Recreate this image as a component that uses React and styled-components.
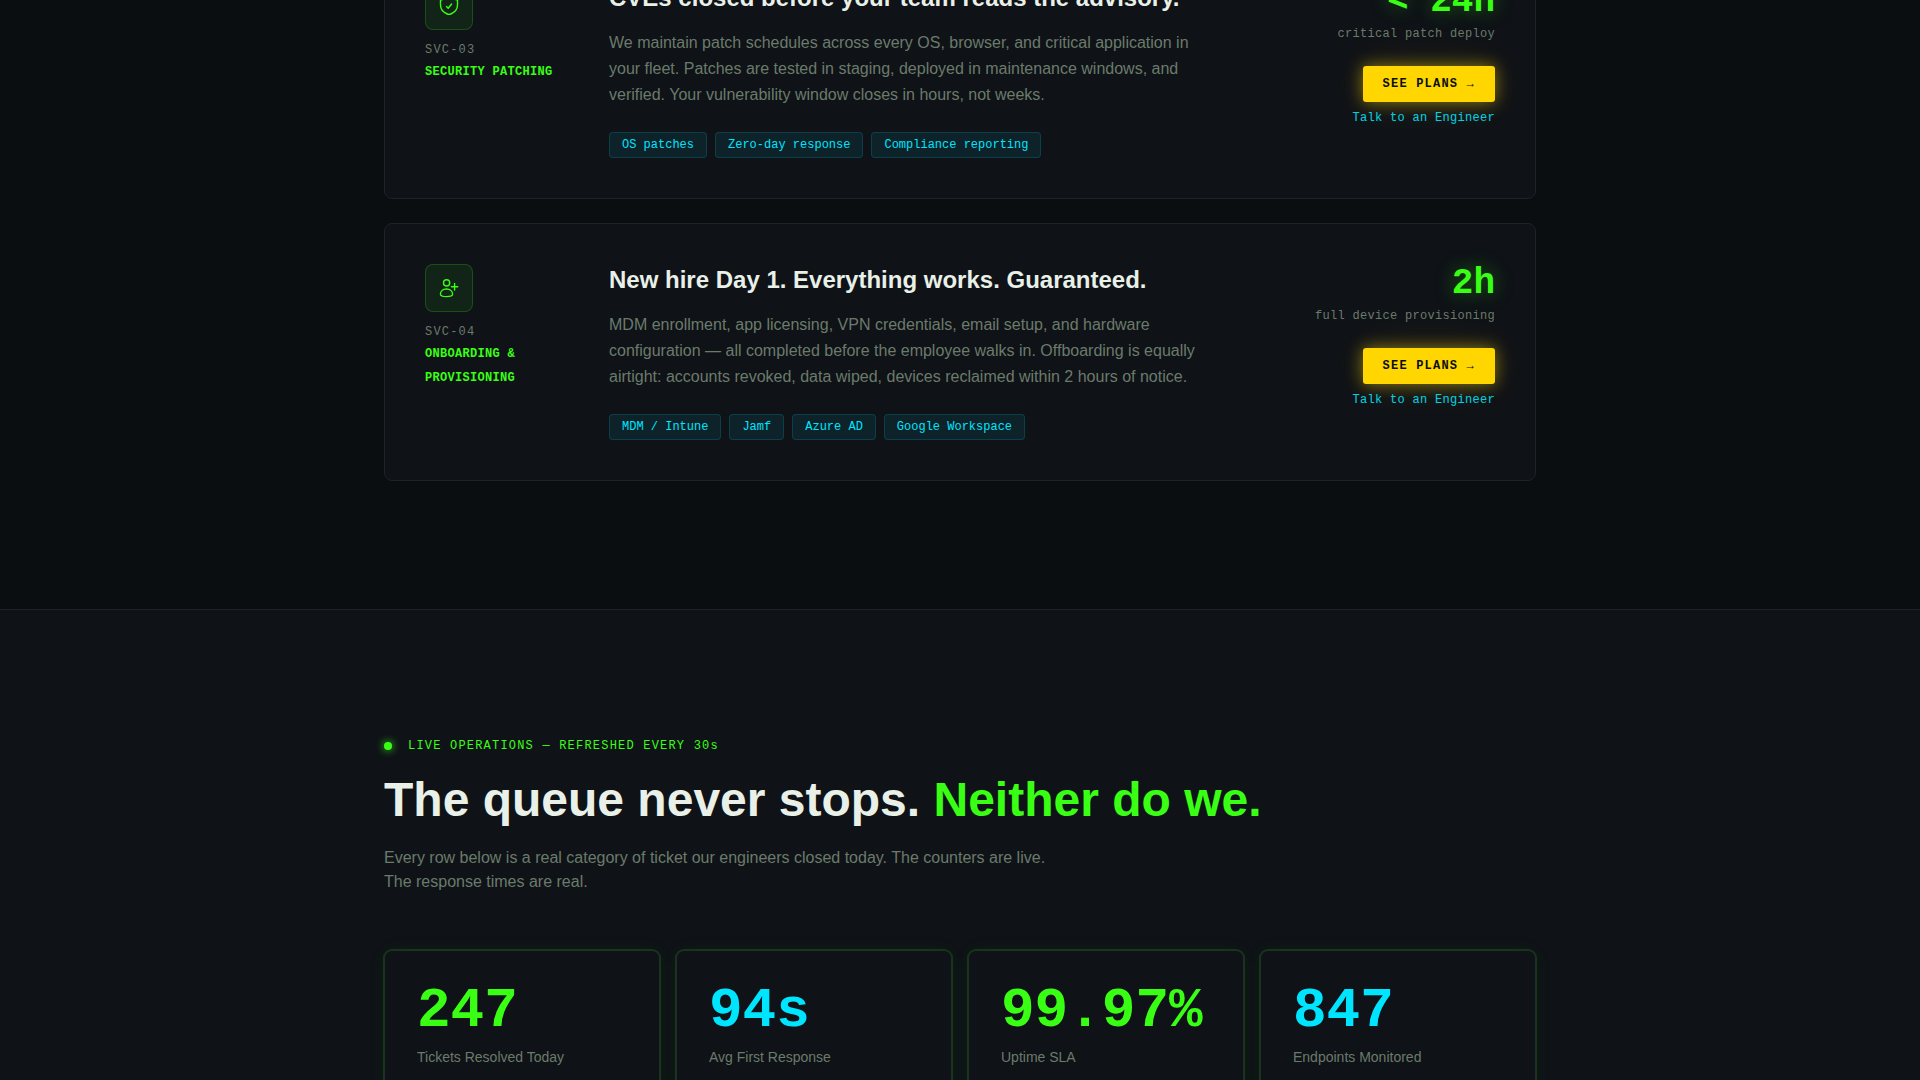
import styled, { createGlobalStyle } from "styled-components";

const services = [
    {
        id: "SVC-03",
        name: "SECURITY PATCHING",
        icon: "shield",
        title: "CVEs closed before your team reads the advisory.",
        text: "We maintain patch schedules across every OS, browser, and critical application in your fleet. Patches are tested in staging, deployed in maintenance windows, and verified. Your vulnerability window closes in hours, not weeks.",
        tags: ["OS patches", "Zero-day response", "Compliance reporting"],
        metric: "< 24h",
        metricLabel: "critical patch deploy"
    },
    {
        id: "SVC-04",
        name: "ONBOARDING & PROVISIONING",
        icon: "user",
        title: "New hire Day 1. Everything works. Guaranteed.",
        text: "MDM enrollment, app licensing, VPN credentials, email setup, and hardware configuration — all completed before the employee walks in. Offboarding is equally airtight: accounts revoked, data wiped, devices reclaimed within 2 hours of notice.",
        tags: ["MDM / Intune", "Jamf", "Azure AD", "Google Workspace"],
        metric: "2h",
        metricLabel: "full device provisioning"
    }
];

const stats = [
    { value: "247", label: "Tickets Resolved Today", color: "#39FF14" },
    { value: "94s", label: "Avg First Response", color: "#00E5FF" },
    { value: "99.97%", label: "Uptime SLA", color: "#39FF14" },
    { value: "847", label: "Endpoints Monitored", color: "#00E5FF" }
];

function ServiceIcon({ type }) {
    return (
        <svg width="20" height="20" viewBox="0 0 20 20" fill="none" stroke="currentColor" strokeWidth="1.4" strokeLinecap="round" strokeLinejoin="round" aria-hidden="true">
            {type === "shield" ?
                <>
                    <path d="M10 1.4 1.5 4.2v4.9c0 5.2 3.9 7.7 6.7 8.9q1.8.8 3.6 0c2.8-1.2 6.7-3.7 6.7-8.9V4.2Z" />
                    <path d="m7.5 10.6 1.7 1.7L12.6 8" />
                </>
                :
                <>
                    <circle cx="7.6" cy="4.9" r="3.1" />
                    <path d="M1.4 16.3C1.4 13 4 11 7.5 11s6.1 2 6.1 5.3c0 1.6-2.5 2.3-6.1 2.3s-6.1-.7-6.1-2.3Z" />
                    <path d="M15.6 5.4V12M12.4 8.7h6.3" />
                </>
            }
        </svg>
    );
}

export default function App() {
    return (
        <>
            <GlobalStyle />
            <Page>
                <Services>
                    <Container>
                        <ServiceList>
                            {services.map(s => (
                                <ServiceCard key={s.id}>
                                    <Identity>
                                        <IconBox><ServiceIcon type={s.icon} /></IconBox>
                                        <ServiceId>{s.id}</ServiceId>
                                        <ServiceName>{s.name}</ServiceName>
                                    </Identity>
                                    <Details>
                                        <ServiceTitle>{s.title}</ServiceTitle>
                                        <ServiceText>{s.text}</ServiceText>
                                        <Tags>
                                            {s.tags.map(t => <Tag key={t}>{t}</Tag>)}
                                        </Tags>
                                    </Details>
                                    <Action>
                                        <Metric>{s.metric}</Metric>
                                        <MetricLabel>{s.metricLabel}</MetricLabel>
                                        <PlansLink href="#plans">SEE PLANS →</PlansLink>
                                        <TalkLink href="#contact">Talk to an Engineer</TalkLink>
                                    </Action>
                                </ServiceCard>
                            ))}
                        </ServiceList>
                    </Container>
                </Services>
                <Operations>
                    <Container>
                        <Eyebrow><Dot />LIVE OPERATIONS — REFRESHED EVERY 30s</Eyebrow>
                        <Heading>The queue never stops. <span>Neither do we.</span></Heading>
                        <Intro>
                            Every row below is a real category of ticket our engineers closed today. The counters are live.
                            The response times are real.
                        </Intro>
                        <Stats>
                            {stats.map(s => (
                                <StatCard key={s.label}>
                                    <StatValue $color={s.color}>{s.value}</StatValue>
                                    <StatLabel>{s.label}</StatLabel>
                                </StatCard>
                            ))}
                        </Stats>
                    </Container>
                </Operations>
            </Page>
        </>
    );
}

const mono = `"Liberation Mono", "Courier New", monospace`;

const GlobalStyle = createGlobalStyle`
    *{
        box-sizing: border-box;
        margin: 0;
        padding: 0;
    }
    body{
        background: #0A0E10;
        color: #E8F0E8;
        font-family: "Liberation Sans", Arial, sans-serif;
        font-size: 16px;
        line-height: 24px;
    }
`;

const Page = styled.main`
    height: 100vh;
    overflow: hidden;
    display: flex;
    flex-direction: column;
`;

/* the list is scrolled, so its first card starts above the window */
const Services = styled.section`
    flex-shrink: 0;
    margin-top: -59px;
    padding-bottom: 128px;
`;

const Container = styled.div`
    width: 100%;
    max-width: 1200px;
    margin: 0 auto;
    padding: 0 24px;
`;

const ServiceList = styled.div`
    display: flex;
    flex-direction: column;
    gap: 24px;
`;

const ServiceCard = styled.article`
    display: grid;
    grid-template-columns: 160px 1fr 200px;
    gap: 24px;
    padding: 40px;
    background: #0F1217;
    border: 1px solid #1E2327;
    border-radius: 8px;
`;

const Identity = styled.div`
    display: flex;
    flex-direction: column;
    align-items: flex-start;
`;

const IconBox = styled.div`
    display: flex;
    align-items: center;
    justify-content: center;
    width: 48px;
    height: 48px;
    margin-bottom: 10px;
    color: #39FF14;
    background: rgba(57, 255, 20, 0.08);
    border: 1px solid rgba(57, 255, 20, 0.2);
    border-radius: 8px;
`;

const ServiceId = styled.p`
    font-family: ${mono};
    font-size: 12px;
    line-height: 20px;
    letter-spacing: 0.1em;
    color: #6B7B6B;
`;

const ServiceName = styled.p`
    font-family: ${mono};
    font-size: 12px;
    font-weight: bold;
    letter-spacing: 0.025em;
    color: #39FF14;
`;

const Details = styled.div`
    max-width: 600px;
`;

const ServiceTitle = styled.h3`
    font-size: 24px;
    line-height: 32px;
    font-weight: bold;
    margin-bottom: 16px;
`;

const ServiceText = styled.p`
    line-height: 26px;
    color: #6B7B6B;
    margin-bottom: 24px;
`;

const Tags = styled.div`
    display: flex;
    flex-wrap: wrap;
    gap: 8px;
`;

const Tag = styled.span`
    padding: 2px 12px;
    font-family: ${mono};
    font-size: 12px;
    line-height: 20px;
    color: #00E5FF;
    background: rgba(0, 229, 255, 0.08);
    border: 1px solid rgba(0, 229, 255, 0.15);
    border-radius: 4px;
`;

const Action = styled.div`
    display: flex;
    flex-direction: column;
    align-items: flex-end;
`;

const Metric = styled.p`
    font-family: ${mono};
    font-size: 36px;
    line-height: 40px;
    font-weight: bold;
    color: #39FF14;
    text-shadow: 0 0 20px rgba(57, 255, 20, 0.4);
`;

const MetricLabel = styled.p`
    margin-bottom: 20px;
    font-family: ${mono};
    font-size: 12px;
    letter-spacing: 0.025em;
    color: #6B7B6B;
`;

const PlansLink = styled.a`
    padding: 8px 20px;
    font-family: ${mono};
    font-size: 12px;
    line-height: 20px;
    font-weight: bold;
    letter-spacing: 0.1em;
    color: #0A0E10;
    text-decoration: none;
    background: #FFD600;
    border-radius: 3px;
    box-shadow: 0 0 16px rgba(255, 214, 0, 0.5), 0 0 40px rgba(255, 214, 0, 0.12);
`;

const TalkLink = styled.a`
    margin-top: 4px;
    font-family: ${mono};
    font-size: 12px;
    letter-spacing: 0.025em;
    color: #00E5FF;
    text-decoration: none;
    opacity: 0.9;
`;

const Operations = styled.section`
    flex-shrink: 0;
    padding: 124px 0 128px;
    background: #0F1217;
    border-top: 1px solid #1E2327;
`;

const Eyebrow = styled.p`
    display: flex;
    align-items: center;
    gap: 16px;
    margin-bottom: 16px;
    font-family: ${mono};
    font-size: 12px;
    letter-spacing: 0.1em;
    color: #39FF14;
`;

const Dot = styled.span`
    width: 8px;
    height: 8px;
    border-radius: 50%;
    background: #39FF14;
    box-shadow: 0 0 8px #39FF14;
`;

const Heading = styled.h2`
    font-size: 48px;
    line-height: 52px;
    font-weight: bold;
    margin-bottom: 20px;
    span{
        color: #39FF14;
    }
`;

const Intro = styled.p`
    max-width: 680px;
    margin-bottom: 56px;
    color: #6B7B6B;
`;

const Stats = styled.div`
    display: grid;
    grid-template-columns: repeat(4, 1fr);
    gap: 16px;
`;

const StatCard = styled.div`
    padding: 32px;
    background: #0F1217;
    border: 1px solid #1E3025;
    border-radius: 8px;
    box-shadow: 0 0 0 1px rgba(57, 255, 20, 0.15), 0 0 20px rgba(57, 255, 20, 0.05);
`;

const StatValue = styled.p`
    font-family: ${mono};
    font-size: 56px;
    line-height: 56px;
    font-weight: bold;
    color: ${props => props.$color};
    margin-bottom: 6px;
`;

const StatLabel = styled.p`
    font-size: 14px;
    color: #6B7B6B;
`;
